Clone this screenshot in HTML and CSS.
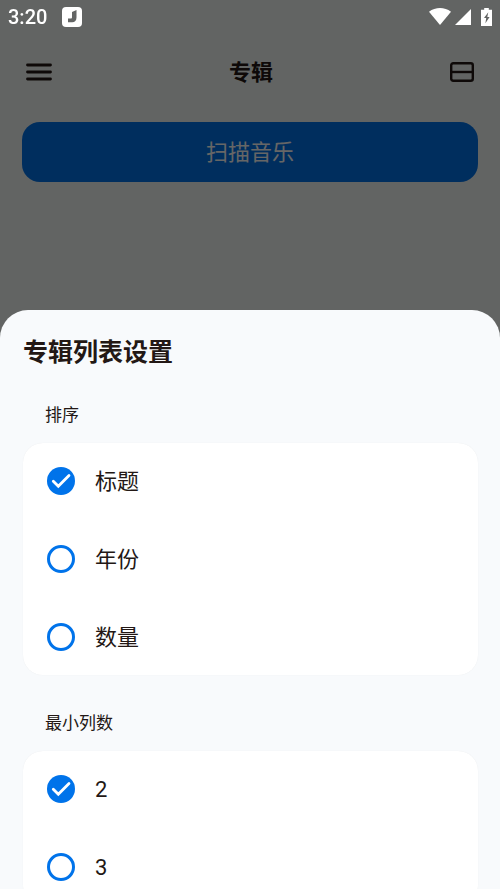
FILE: index.html
```html
<!DOCTYPE html>
<html lang="zh-CN">
<head>
    <meta charset="UTF-8">
    <meta name="viewport" content="width=device-width, initial-scale=1">
    <title>专辑</title>
    <link rel="stylesheet" href="styles.css">
</head>
<body>
    <div class="status-bar">
        <span class="time">3:20</span>
        <svg class="app-icon" width="20" height="20" viewBox="0 0 20 20">
            <rect width="20" height="20" rx="4" fill="#fff"/>
            <path d="M10 5l4.500-2v7.500c0 3-1.600 4.800-4.300 4.800H6v-3.800h2.700c.9 0 1.300-.4 1.300-1.300z" fill="#636564"/>
        </svg>
        <div class="status-icons">
            <svg width="22" height="18" viewBox="0 0 22 18">
                <path d="M0 3.800C6.500-1.200 15.500-1.200 22 3.800L11 17z" fill="#fff"/>
            </svg>
            <svg width="16" height="18" viewBox="0 0 16 18">
                <path d="M16 1v16H0z" fill="#fff"/>
            </svg>
            <svg class="battery" width="11" height="18" viewBox="0 0 11 18">
                <path d="M3.200 0h4.600v1.800H11V18H0V1.800h3.200z" fill="#fff"/>
                <path d="M7.300 4.300 3 10h2.200l-.8 5.200L8.600 9H6.300z" fill="#636564"/>
            </svg>
        </div>
    </div>

    <main class="page">
        <header class="top-bar">
            <button class="icon-button" type="button" aria-label="菜单">
                <svg width="26" height="18" viewBox="0 0 26 18" fill="none" stroke="#231815" stroke-width="2.800" stroke-linecap="round">
                    <path d="M1.500 2h23M1.500 9h23M1.500 16h23"/>
                </svg>
            </button>
            <h1>专辑</h1>
            <button class="icon-button" type="button" aria-label="列表设置">
                <svg width="24" height="20" viewBox="0 0 24 20" fill="none" stroke="#231815" stroke-width="2.400">
                    <rect x="1.200" y="1.200" width="21.600" height="17.600" rx="2"/>
                    <path d="M1 10h22"/>
                </svg>
            </button>
        </header>
        <button class="scan-button" type="button">扫描音乐</button>
    </main>

    <div class="scrim"></div>

    <section class="sheet">
        <h2>专辑列表设置</h2>

        <fieldset>
            <legend>排序</legend>
            <div class="card">
                <label class="option"><input type="radio" name="sort" checked><span class="name">标题</span></label>
                <label class="option"><input type="radio" name="sort"><span class="name">年份</span></label>
                <label class="option"><input type="radio" name="sort"><span class="name">数量</span></label>
            </div>
        </fieldset>

        <fieldset>
            <legend>最小列数</legend>
            <div class="card">
                <label class="option"><input type="radio" name="columns" checked>2</label>
                <label class="option"><input type="radio" name="columns">3</label>
            </div>
        </fieldset>
    </section>
</body>
</html>
```

FILE: styles.css
```css
* { box-sizing: border-box; }
body { margin: 0; height: 100vh; overflow: hidden; background: #f6faf8; color: #231815; font-family: Roboto, "Noto Sans CJK SC", sans-serif; }
button { border: none; padding: 0; font-family: inherit; cursor: pointer; }

.status-bar { position: relative; z-index: 2; display: flex; align-items: center; height: 34px; padding: 0 8px; color: #fff; }
.time { font-size: 20px; font-weight: 500; line-height: 34px; }
.app-icon { margin-left: 15px; }
.status-icons { display: flex; align-items: center; gap: 4px; margin-left: auto; }
.battery { margin-left: 6px; }

.page { padding: 0 22px; }
.top-bar { display: flex; align-items: center; justify-content: space-between; height: 76px; padding: 0 4px; }
.top-bar h1 { margin: 0; padding-top: 2px; font-size: 22px; font-weight: 700; line-height: 32px; }
.icon-button { display: flex; background: none; }
.scan-button { display: block; width: 100%; height: 60px; margin-top: 12px; padding-bottom: 4px; border-radius: 18px; background: #0073ea; color: #fff; font-size: 22px; }

.scrim { position: fixed; inset: 0; z-index: 1; background: rgba(0, 0, 0, 0.6); }

.sheet { position: fixed; inset: 310px 0 0; z-index: 3; overflow: hidden; padding: 24px 22px 0 23px; border-radius: 28px 28px 0 0; background: #f8fafc; }
.sheet h2 { margin: 0 0 31px; font-size: 25px; font-weight: 700; line-height: 38px; }
fieldset { min-width: 0; margin: 0 0 36px; padding: 0; border: none; }
legend { padding: 0 22px; font-size: 17px; line-height: 24px; }
.card { display: flex; flex-direction: column; gap: 2px; margin-top: 16px; border-radius: 20px; background: #fff; box-shadow: 0 0 1px rgba(0, 0, 0, 0.08); }
.option { display: flex; align-items: center; gap: 20px; height: 76px; padding: 0 24px; font-size: 22px; cursor: pointer; }
.option input { appearance: none; width: 28px; height: 28px; margin: 0; border: 3px solid #0073ea; border-radius: 50%; background: #fff; cursor: pointer; }
.option input:checked { border: none; background: #0073ea url("data:image/svg+xml,%3Csvg xmlns='http://www.w3.org/2000/svg' viewBox='0 0 28 28'%3E%3Cpath d='M6.300 14.300l5 5L22 8.500' fill='none' stroke='%23fff' stroke-width='2.800' stroke-linecap='round'/%3E%3C/svg%3E") center / 28px 28px no-repeat; }
.name { padding-bottom: 4px; }
```
